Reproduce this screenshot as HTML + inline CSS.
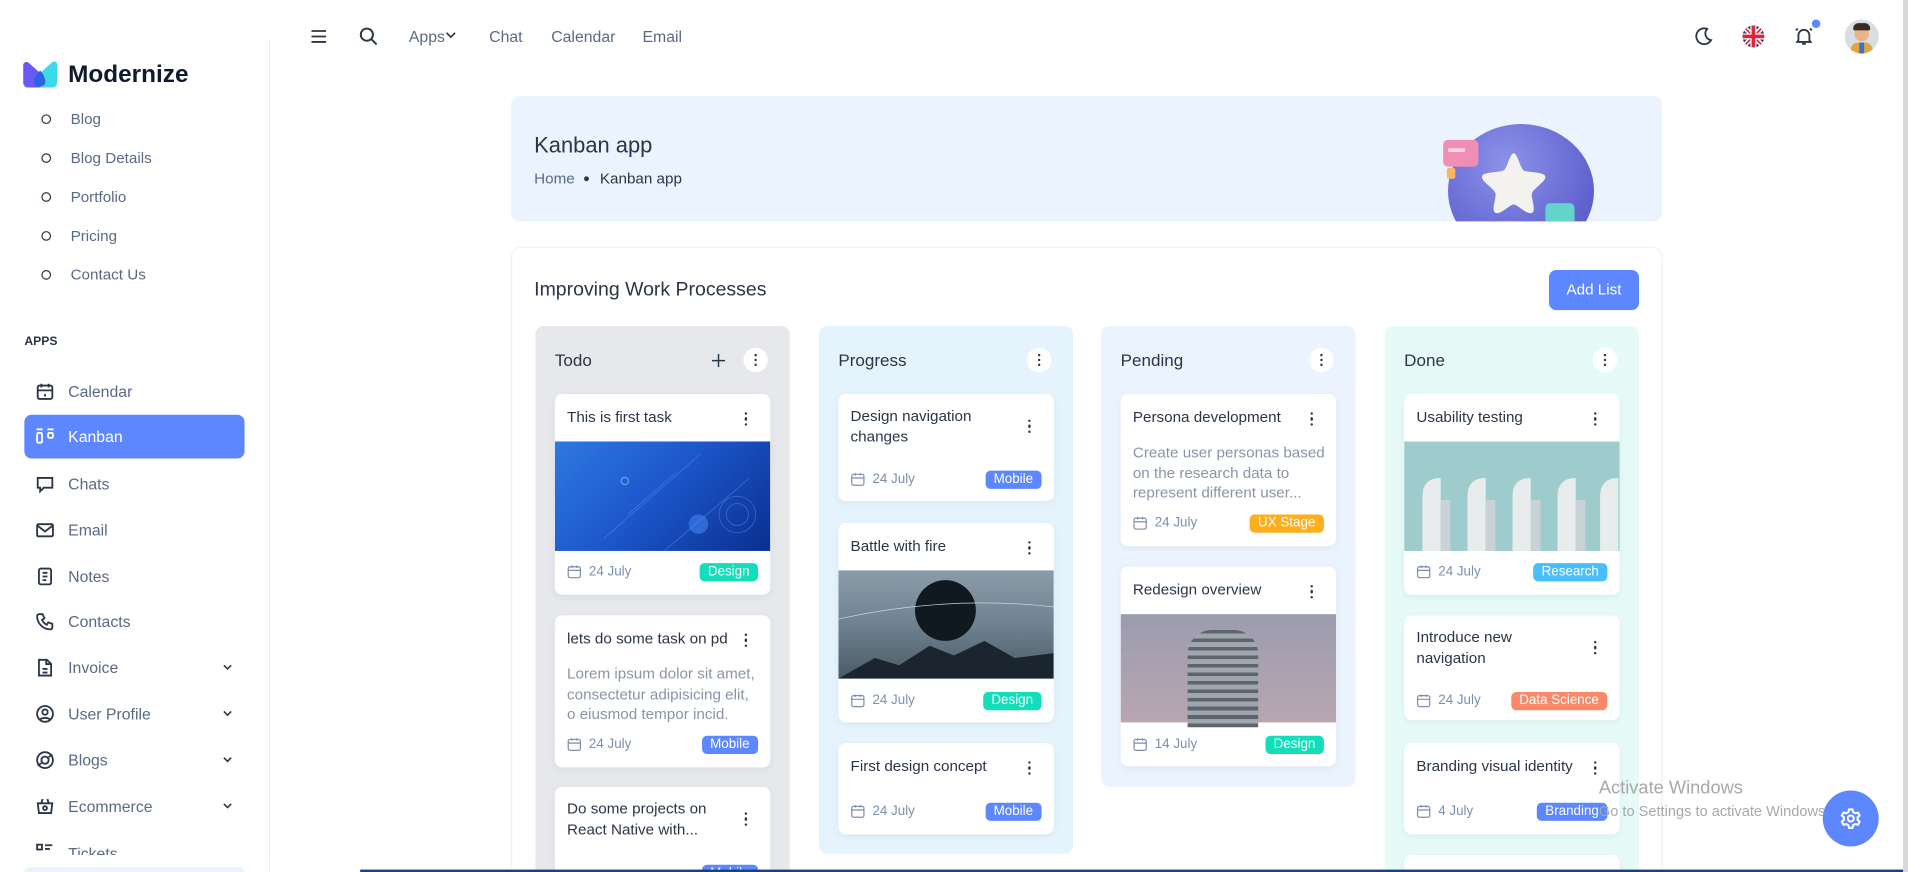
<!DOCTYPE html>
<html><head><meta charset="utf-8">
<style>
*{box-sizing:border-box;margin:0;padding:0}
html,body{width:1908px;height:872px;overflow:hidden;background:#fff}
#w{position:absolute;left:0;top:0;width:1568px;height:717px;overflow:hidden;transform:scale(1.2168,1.2162);transform-origin:0 0;font-family:"Liberation Sans",sans-serif;color:#2a3547}
.a{position:absolute}
.t{position:absolute;white-space:nowrap;transform:translateY(-50%)}
.side{font-size:13px;color:#2a3547}
.sub{font-size:12.5px;color:#5a6a85}
.circ{position:absolute;width:8px;height:8px;border:1.3px solid #2a3547;border-radius:50%;transform:translateY(-50%)}
.nav{font-size:13px;color:#5a6a85}
.col{position:absolute;top:268px;width:209px;border-radius:7px}
.card{position:absolute;left:16px;width:177px;background:#fff;border-radius:6px;box-shadow:0 2px 6px rgba(0,0,0,.05);overflow:hidden}
.ct{position:absolute;left:10px;font-size:12.5px;color:#2a3547;line-height:17px}
.dots{position:absolute;right:18px;width:3px}
.dots i{display:block;width:2.4px;height:2.4px;background:#2a3547;border-radius:50%;margin-bottom:2px}
.desc{position:absolute;left:10px;font-size:12.5px;color:#8a94a6;line-height:16.5px;width:158px}
.date{position:absolute;left:10px;font-size:11px;color:#7c8fac;display:flex;align-items:center;gap:6px}
.badge{position:absolute;right:10px;height:15px;line-height:15px;padding:0 7px;border-radius:4px;color:#fff;font-size:11px}
.img{position:absolute;left:0;width:177px}
.hd{position:absolute;left:16px;top:28px;font-size:14px;color:#2a3547;transform:translateY(-50%)}
.db{position:absolute;top:18px;right:18px;width:20px;height:20px;background:#fff;border-radius:50%}
.db i{position:absolute;left:9px;width:2.2px;height:2.2px;background:#2a3547;border-radius:50%}
</style></head><body><div id="w">

<!-- sidebar -->
<div class="a" style="left:221px;top:32px;width:1px;height:685px;background:#e9edf2"></div>
<svg class="a" style="left:19px;top:50px" width="28" height="22" viewBox="0 0 28 22"><path d="M0 4C0 1 3 0 5 2L14 10L14 22H4C2 22 0 20 0 18Z" fill="#6a5af5"/><path d="M28 3C28 1 26 0 24 1L14 10V22H24C26 22 28 20 28 18Z" fill="#3dd8ea"/><path d="M14 8C10 12 8 16 9 19C10 22 16 22 18 19C19 16 17 11 14 8Z" fill="#2d63e0"/></svg>
<div class="t" style="left:56px;top:62px;font-size:20px;font-weight:bold;color:#0f1a2e">Modernize</div>

<div class="circ" style="left:34px;top:98px"></div><div class="t sub" style="left:58px;top:98px">Blog</div>
<div class="circ" style="left:34px;top:130px"></div><div class="t sub" style="left:58px;top:130px">Blog Details</div>
<div class="circ" style="left:34px;top:162px"></div><div class="t sub" style="left:58px;top:162px">Portfolio</div>
<div class="circ" style="left:34px;top:194px"></div><div class="t sub" style="left:58px;top:194px">Pricing</div>
<div class="circ" style="left:34px;top:226px"></div><div class="t sub" style="left:58px;top:226px">Contact Us</div>

<div class="t" style="left:20px;top:281px;font-size:10px;font-weight:bold;color:#2a3547">APPS</div>
<div class="a" style="left:20px;top:341px;width:181px;height:36px;background:#5d87ff;border-radius:6px"></div>

<svg class="a" style="left:29px;top:314px" width="16" height="16" viewBox="0 0 16 16" fill="none" stroke="#2a3547" stroke-width="1.5"><rect x="2" y="3" width="12" height="11" rx="1.5"/><path d="M2 7h12M5 1.5v3M11 1.5v3M8 10v2"/></svg>
<div class="t side" style="left:56px;top:322px;color:#5a6a85">Calendar</div>
<svg class="a" style="left:29px;top:352px" width="16" height="14" viewBox="0 0 16 14" fill="none" stroke="#fff" stroke-width="1.5"><path d="M1 1h5M10 1h5"/><rect x="1.5" y="4" width="4" height="8" rx="1"/><rect x="10.5" y="4" width="4" height="4" rx="1"/></svg>
<div class="t side" style="left:56px;top:359px;color:#fff">Kanban</div>
<svg class="a" style="left:29px;top:390px" width="16" height="16" viewBox="0 0 16 16" fill="none" stroke="#2a3547" stroke-width="1.5"><path d="M2 3h12v8H7l-3 3v-3H2z"/><path d="M5.5 7h.1M8 7h.1M10.5 7h.1"/></svg>
<div class="t side" style="left:56px;top:398px;color:#5a6a85">Chats</div>
<svg class="a" style="left:29px;top:429px" width="16" height="14" viewBox="0 0 16 14" fill="none" stroke="#2a3547" stroke-width="1.5"><rect x="1.5" y="2" width="13" height="10" rx="1"/><path d="M1.5 3l6.5 5 6.5-5"/></svg>
<div class="t side" style="left:56px;top:436px;color:#5a6a85">Email</div>
<svg class="a" style="left:29px;top:466px" width="16" height="16" viewBox="0 0 16 16" fill="none" stroke="#2a3547" stroke-width="1.5"><rect x="3" y="1.5" width="10" height="13" rx="1.5"/><path d="M6 5h4M6 8h4M6 11h3"/></svg>
<div class="t side" style="left:56px;top:474px;color:#5a6a85">Notes</div>
<svg class="a" style="left:29px;top:503px" width="16" height="16" viewBox="0 0 16 16" fill="none" stroke="#2a3547" stroke-width="1.5"><path d="M3 2h3l1.5 3.5-2 1.2a8 8 0 004 4l1.2-2L14 10v3a1.5 1.5 0 01-1.5 1.5A11 11 0 011.5 3.5 1.5 1.5 0 013 2z"/></svg>
<div class="t side" style="left:56px;top:511px;color:#5a6a85">Contacts</div>
<svg class="a" style="left:29px;top:541px" width="16" height="16" viewBox="0 0 16 16" fill="none" stroke="#2a3547" stroke-width="1.5"><path d="M3 1.5h6.5L13 5v9.5H3z"/><path d="M9 1.5V5h4M6 9h4M6 12h4"/></svg>
<div class="t side" style="left:56px;top:549px;color:#5a6a85">Invoice</div>
<svg class="a" style="left:29px;top:579px" width="16" height="16" viewBox="0 0 16 16" fill="none" stroke="#2a3547" stroke-width="1.5"><circle cx="8" cy="8" r="6.5"/><circle cx="8" cy="6.5" r="2.2"/><path d="M4 12.8c1-2 7-2 8 0"/></svg>
<div class="t side" style="left:56px;top:587px;color:#5a6a85">User Profile</div>
<svg class="a" style="left:29px;top:617px" width="16" height="16" viewBox="0 0 16 16" fill="none" stroke="#2a3547" stroke-width="1.5"><circle cx="8" cy="8" r="6.5"/><circle cx="8" cy="8" r="3"/><path d="M5 10.5l-3 2M11 5.5l3-2"/></svg>
<div class="t side" style="left:56px;top:625px;color:#5a6a85">Blogs</div>
<svg class="a" style="left:29px;top:655px" width="16" height="16" viewBox="0 0 16 16" fill="none" stroke="#2a3547" stroke-width="1.5"><path d="M2 5.5h12l-1 8H3z"/><path d="M5 5.5L6 2M11 5.5L10 2"/><circle cx="8" cy="9.5" r="1.6"/></svg>
<div class="t side" style="left:56px;top:663px;color:#5a6a85">Ecommerce</div>
<svg class="a" style="left:29px;top:693px" width="16" height="10" viewBox="0 0 16 10" fill="none" stroke="#2a3547" stroke-width="1.5"><rect x="1.5" y="1.5" width="4" height="4"/><path d="M8 2h6M8 5h4"/></svg>
<div class="t side" style="left:56px;top:702px;color:#5a6a85">Tickets</div>
<div class="a" style="left:0;top:703px;width:221px;height:14px;background:#fff"></div>
<div class="a" style="left:20px;top:713px;width:181px;height:4px;background:#ecf2ff;border-radius:4px 4px 0 0"></div>
<svg class="a" style="left:181px;top:544px" width="12" height="140" viewBox="0 0 12 140" fill="none" stroke="#2a3547" stroke-width="1.3"><path d="M3 3l3 3 3-3M3 41l3 3 3-3M3 79l3 3 3-3M3 117l3 3 3-3"/></svg>

<!-- topbar -->
<svg class="a" style="left:255px;top:23px" width="14" height="14" viewBox="0 0 14 14" stroke="#2a3547" stroke-width="1.5"><path d="M1 2.5h12M1 7h12M1 11.5h12"/></svg>
<svg class="a" style="left:295px;top:22px" width="16" height="16" viewBox="0 0 16 16" fill="none" stroke="#2a3547" stroke-width="1.6"><circle cx="6.5" cy="6.5" r="5"/><path d="M10.5 10.5l4 4"/></svg>
<div class="t nav" style="left:336px;top:30px">Apps</div>
<svg class="a" style="left:366px;top:26px" width="9" height="6" viewBox="0 0 9 6" fill="none" stroke="#2a3547" stroke-width="1.3"><path d="M1 1l3.5 3.5L8 1"/></svg>
<div class="t nav" style="left:402px;top:30px">Chat</div>
<div class="t nav" style="left:453px;top:30px">Calendar</div>
<div class="t nav" style="left:528px;top:30px">Email</div>

<svg class="a" style="left:1392px;top:22px" width="16" height="16" viewBox="0 0 16 16" fill="none" stroke="#2a3547" stroke-width="1.5"><path d="M11 1.8A6.5 6.5 0 1014.2 11 5.5 5.5 0 0111 1.8z"/></svg>
<svg class="a" style="left:1432px;top:21px" width="18" height="18" viewBox="0 0 18 18"><defs><clipPath id="fc"><circle cx="9" cy="9" r="9"/></clipPath></defs><g clip-path="url(#fc)"><rect width="18" height="18" fill="#1f3a93"/><path d="M0 0L18 18M18 0L0 18" stroke="#fff" stroke-width="4"/><path d="M0 0L18 18M18 0L0 18" stroke="#d8283a" stroke-width="1.4"/><path d="M9 0v18M0 9h18" stroke="#fff" stroke-width="5"/><path d="M9 0v18M0 9h18" stroke="#d8283a" stroke-width="3"/></g></svg>
<svg class="a" style="left:1474px;top:21px" width="17" height="17" viewBox="0 0 17 17" fill="none" stroke="#2a3547" stroke-width="1.5"><path d="M4 12V8a4.5 4.5 0 019 0v4l1 1.5H3z"/><path d="M7 15h3M2 4l1.5-1.5M15 4l-1.5-1.5"/></svg>
<div class="a" style="left:1489px;top:16px;width:7px;height:7px;border-radius:50%;background:#5d87ff"></div>
<div class="a" style="left:1516px;top:16px;width:28px;height:28px;border-radius:50%;background:#d8dee2;overflow:hidden">
<div class="a" style="left:8px;top:5px;width:12px;height:13px;border-radius:50%;background:#e8b48a"></div>
<div class="a" style="left:7px;top:3px;width:14px;height:6px;border-radius:6px 6px 2px 2px;background:#3a2a22"></div>
<div class="a" style="left:5px;top:19px;width:18px;height:12px;border-radius:6px 6px 0 0;background:#e2a63a"></div>
<div class="a" style="left:12px;top:19px;width:4px;height:10px;background:#3a6fd0"></div></div>
<div class="a" style="left:1564px;top:0;width:4px;height:717px;background:#d8d8d8"></div>

<!-- banner -->
<div class="a" style="left:420px;top:79px;width:946px;height:103px;background:#ebf3fe;border-radius:7px;overflow:hidden">
<div class="a" style="left:770px;top:23px;width:120px;height:110px;border-radius:50%;background:radial-gradient(circle at 40% 30%,#8d92e8,#5f62cf 70%,#5355c0)"></div>
<div class="a" style="left:766px;top:36px;width:29px;height:22px;border-radius:4px;background:#ef8fb6"></div>
<div class="a" style="left:770px;top:43px;width:14px;height:3px;background:#fbd7e6"></div>
<div class="a" style="left:769px;top:59px;width:7px;height:9px;border-radius:2px;background:#f6b862"></div>
<svg class="a" style="left:795px;top:44px" width="58" height="54" viewBox="0 0 58 54"><path d="M29 3C32 3 34 14 37 17C40 19 54 18 55 22C56 26 45 32 44 36C43 40 48 50 44 52C40 54 32 45 29 45C26 45 18 54 14 52C10 50 15 40 14 36C13 32 2 26 3 22C4 18 18 19 21 17C24 14 26 3 29 3Z" fill="#f3f2ef"/></svg>
<div class="a" style="left:850px;top:88px;width:24px;height:20px;border-radius:4px;background:#62d4c9"></div>
</div>
<div class="t" style="left:439px;top:120px;font-size:18px;color:#2a3547">Kanban app</div>
<div class="t" style="left:439px;top:147px;font-size:12.5px;color:#5a6a85">Home</div>
<div class="a" style="left:480px;top:145px;width:4px;height:4px;border-radius:50%;background:#2a3547"></div>
<div class="t" style="left:493px;top:147px;font-size:12.5px;color:#2a3547">Kanban app</div>

<!-- main card -->
<div class="a" style="left:420px;top:203px;width:946px;height:530px;background:#fff;border:1px solid #f0f2f5;border-radius:8px;box-shadow:0 1px 4px rgba(0,0,0,.03)"></div>
<div class="t" style="left:439px;top:239px;font-size:16px;color:#2a3547">Improving Work Processes</div>
<div class="a" style="left:1273px;top:222px;width:74px;height:33px;background:#5d87ff;border-radius:6px;color:#fff;font-size:12.5px;line-height:33px;text-align:center">Add List</div>

<!-- Todo -->
<div class="col" style="left:440px;height:460px;background:#e6e8ec">
<div class="hd">Todo</div>
<svg class="a" style="left:145px;top:23px" width="11" height="11" viewBox="0 0 11 11" stroke="#2a3547" stroke-width="1.2"><path d="M5.5 0v11M0 5.5h11"/></svg>
<div class="db"><i style="top:5px"></i><i style="top:9px"></i><i style="top:13px"></i></div>
<div class="card" style="top:56px;height:165px">
<div class="ct" style="top:11px">This is first task</div><div class="dots" style="top:15px"><i></i><i></i><i></i></div>
<div class="img" style="top:39px;height:90px;background:linear-gradient(135deg,#2f78e0 0%,#1d58cc 45%,#0a2f8f 100%)">
<div class="a" style="left:110px;top:60px;width:16px;height:16px;border-radius:50%;background:#3a7ae8;opacity:.7"></div>
<div class="a" style="left:54px;top:29px;width:7px;height:7px;border-radius:50%;border:1px solid #6a9cf0"></div>
<svg class="a" style="left:0;top:0" width="177" height="90"><path d="M40 80L120 10M90 90L160 30M60 60L100 25" stroke="#5a90ec" stroke-width=".6" opacity=".6"/><circle cx="150" cy="60" r="15" fill="none" stroke="#3a6ed8" stroke-width=".6"/><circle cx="150" cy="60" r="9" fill="none" stroke="#3a6ed8" stroke-width=".6"/></svg></div>
<div class="date" style="top:140px"><svg width="12" height="12" viewBox="0 0 12 12" fill="none" stroke="#7c8fac" stroke-width="1"><rect x="1" y="2" width="10" height="9" rx="1.5"/><path d="M1 5h10M4 1v2M8 1v2"/></svg>24 July</div>
<div class="badge" style="top:139px;background:#13deb9">Design</div></div>
<div class="card" style="top:238px;height:125px">
<div class="ct" style="top:11px">lets do some task on pd</div><div class="dots" style="top:15px"><i></i><i></i><i></i></div>
<div class="desc" style="top:40px">Lorem ipsum dolor sit amet, consectetur adipisicing elit, o eiusmod tempor incid.</div>
<div class="date" style="top:100px"><svg width="12" height="12" viewBox="0 0 12 12" fill="none" stroke="#7c8fac" stroke-width="1"><rect x="1" y="2" width="10" height="9" rx="1.5"/><path d="M1 5h10M4 1v2M8 1v2"/></svg>24 July</div>
<div class="badge" style="top:99px;background:#5d87ff">Mobile</div></div>
<div class="card" style="top:379px;height:90px">
<div class="ct" style="top:10px">Do some projects on<br>React Native with...</div><div class="dots" style="top:21px"><i></i><i></i><i></i></div>
<div class="badge" style="top:64px;background:#5d87ff">Mobile</div></div>
</div>

<!-- Progress -->
<div class="col" style="left:673px;height:434px;background:#e5f3fd">
<div class="hd">Progress</div>
<div class="db"><i style="top:5px"></i><i style="top:9px"></i><i style="top:13px"></i></div>
<div class="card" style="top:56px;height:88px">
<div class="ct" style="top:10px">Design navigation<br>changes</div><div class="dots" style="top:21px"><i></i><i></i><i></i></div>
<div class="date" style="top:64px"><svg width="12" height="12" viewBox="0 0 12 12" fill="none" stroke="#7c8fac" stroke-width="1"><rect x="1" y="2" width="10" height="9" rx="1.5"/><path d="M1 5h10M4 1v2M8 1v2"/></svg>24 July</div>
<div class="badge" style="top:63px;background:#5d87ff">Mobile</div></div>
<div class="card" style="top:162px;height:164px">
<div class="ct" style="top:11px">Battle with fire</div><div class="dots" style="top:15px"><i></i><i></i><i></i></div>
<div class="img" style="top:39px;height:89px;background:linear-gradient(180deg,#8a9ca8 0%,#6f8290 50%,#4b5a66 100%);overflow:hidden">
<div class="a" style="left:63px;top:8px;width:50px;height:50px;border-radius:50%;background:#101820"></div>
<svg class="a" style="left:0;top:0" width="177" height="89"><path d="M0 89L30 72L50 78L75 62L95 70L120 58L145 72L177 68V89Z" fill="#1a2530"/><path d="M0 40Q90 20 177 30" stroke="#c8d4dc" stroke-width=".6" fill="none"/></svg></div>
<div class="date" style="top:140px"><svg width="12" height="12" viewBox="0 0 12 12" fill="none" stroke="#7c8fac" stroke-width="1"><rect x="1" y="2" width="10" height="9" rx="1.5"/><path d="M1 5h10M4 1v2M8 1v2"/></svg>24 July</div>
<div class="badge" style="top:139px;background:#13deb9">Design</div></div>
<div class="card" style="top:343px;height:75px">
<div class="ct" style="top:11px">First design concept</div><div class="dots" style="top:15px"><i></i><i></i><i></i></div>
<div class="date" style="top:50px"><svg width="12" height="12" viewBox="0 0 12 12" fill="none" stroke="#7c8fac" stroke-width="1"><rect x="1" y="2" width="10" height="9" rx="1.5"/><path d="M1 5h10M4 1v2M8 1v2"/></svg>24 July</div>
<div class="badge" style="top:49px;background:#5d87ff">Mobile</div></div>
</div>

<!-- Pending -->
<div class="col" style="left:905px;height:379px;background:#ebf3fe">
<div class="hd">Pending</div>
<div class="db"><i style="top:5px"></i><i style="top:9px"></i><i style="top:13px"></i></div>
<div class="card" style="top:56px;height:125px">
<div class="ct" style="top:11px">Persona development</div><div class="dots" style="top:15px"><i></i><i></i><i></i></div>
<div class="desc" style="top:40px">Create user personas based on the research data to represent different user...</div>
<div class="date" style="top:100px"><svg width="12" height="12" viewBox="0 0 12 12" fill="none" stroke="#7c8fac" stroke-width="1"><rect x="1" y="2" width="10" height="9" rx="1.5"/><path d="M1 5h10M4 1v2M8 1v2"/></svg>24 July</div>
<div class="badge" style="top:99px;background:#ffae1f">UX Stage</div></div>
<div class="card" style="top:198px;height:164px">
<div class="ct" style="top:11px">Redesign overview</div><div class="dots" style="top:15px"><i></i><i></i><i></i></div>
<div class="img" style="top:39px;height:89px;background:linear-gradient(180deg,#9b9caf,#b8a6b0)">
<div class="a" style="left:55px;top:13px;width:58px;height:80px;border-radius:20px 20px 0 0;background:repeating-linear-gradient(180deg,#5d6470 0 3px,#a0a6ae 3px 7px)"></div></div>
<div class="date" style="top:140px"><svg width="12" height="12" viewBox="0 0 12 12" fill="none" stroke="#7c8fac" stroke-width="1"><rect x="1" y="2" width="10" height="9" rx="1.5"/><path d="M1 5h10M4 1v2M8 1v2"/></svg>14 July</div>
<div class="badge" style="top:139px;background:#13deb9">Design</div></div>
</div>

<!-- Done -->
<div class="col" style="left:1138px;height:460px;background:#e6fbf7">
<div class="hd">Done</div>
<div class="db"><i style="top:5px"></i><i style="top:9px"></i><i style="top:13px"></i></div>
<div class="card" style="top:56px;height:165px">
<div class="ct" style="top:11px">Usability testing</div><div class="dots" style="top:15px"><i></i><i></i><i></i></div>
<div class="img" style="top:39px;height:90px;background:#9ecbcb">
<svg class="a" style="left:0;top:0" width="177" height="90"><g fill="#e8eced"><path d="M15 90V45Q15 30 30 30V90Z"/><path d="M52 90V45Q52 30 67 30V90Z"/><path d="M89 90V45Q89 30 104 30V90Z"/><path d="M126 90V45Q126 30 141 30V90Z"/><path d="M161 90V45Q161 30 176 30V90Z"/></g><g fill="#c9d2d4"><rect x="30" y="48" width="8" height="42"/><rect x="67" y="48" width="8" height="42"/><rect x="104" y="48" width="8" height="42"/><rect x="141" y="48" width="8" height="42"/></g></svg></div>
<div class="date" style="top:140px"><svg width="12" height="12" viewBox="0 0 12 12" fill="none" stroke="#7c8fac" stroke-width="1"><rect x="1" y="2" width="10" height="9" rx="1.5"/><path d="M1 5h10M4 1v2M8 1v2"/></svg>24 July</div>
<div class="badge" style="top:139px;background:#49beff">Research</div></div>
<div class="card" style="top:238px;height:86px">
<div class="ct" style="top:10px">Introduce new<br>navigation</div><div class="dots" style="top:21px"><i></i><i></i><i></i></div>
<div class="date" style="top:64px"><svg width="12" height="12" viewBox="0 0 12 12" fill="none" stroke="#7c8fac" stroke-width="1"><rect x="1" y="2" width="10" height="9" rx="1.5"/><path d="M1 5h10M4 1v2M8 1v2"/></svg>24 July</div>
<div class="badge" style="top:63px;background:#fa896b">Data Science</div></div>
<div class="card" style="top:343px;height:75px">
<div class="ct" style="top:11px">Branding visual identity</div><div class="dots" style="top:15px"><i></i><i></i><i></i></div>
<div class="date" style="top:50px"><svg width="12" height="12" viewBox="0 0 12 12" fill="none" stroke="#7c8fac" stroke-width="1"><rect x="1" y="2" width="10" height="9" rx="1.5"/><path d="M1 5h10M4 1v2M8 1v2"/></svg>4 July</div>
<div class="badge" style="top:49px;background:#5d87ff">Branding</div></div>
<div class="card" style="top:435px;height:40px"></div>
</div>

<!-- windows watermark -->
<div class="t" style="left:1314px;top:648px;font-size:15px;color:#a8a8a8">Activate Windows</div>
<div class="t" style="left:1314px;top:667px;font-size:12px;color:#a8a8a8">Go to Settings to activate Windows.</div>
<div class="a" style="left:1498px;top:650px;width:46px;height:46px;border-radius:50%;background:#5d87ff"></div>
<svg class="a" style="left:1511px;top:663px" width="20" height="20" viewBox="0 0 24 24" fill="none" stroke="#fff" stroke-width="2"><circle cx="12" cy="12" r="3"/><path d="M10.3 3h3.4l.6 2.6 2.2 1.3 2.6-.8 1.7 3-2 1.8v2.5l2 1.8-1.7 3-2.6-.8-2.2 1.3-.6 2.6h-3.4l-.6-2.6-2.2-1.3-2.6.8-1.7-3 2-1.8v-2.5l-2-1.8 1.7-3 2.6.8 2.2-1.3z"/></svg>
<div class="a" style="left:296px;top:715px;width:1268px;height:2px;background:#1d3d8a"></div>
</div></body></html>
